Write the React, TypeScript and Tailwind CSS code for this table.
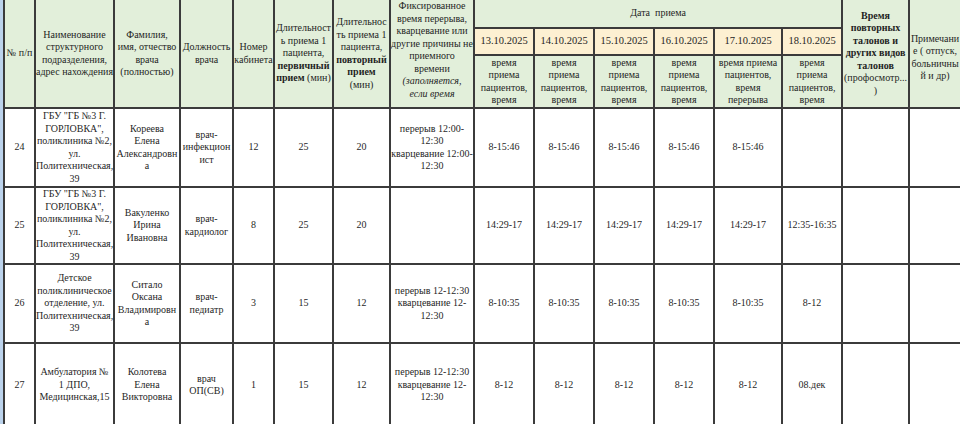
import React from 'react';

const B = 'border-2 border-[#3b3b3b]';
const head = `bg-[#e2efda] ${B} p-0 text-center align-middle`;
const cell = `bg-white ${B} p-0 text-center align-middle`;

const Lines = ({ lines }: { lines: React.ReactNode[] }) => (
  <>
    {lines.map((l, i) => (
      <div key={i} className="whitespace-nowrap">
        {l}
      </div>
    ))}
  </>
);

const addr1 = ['ГБУ "ГБ №3 Г.', 'ГОРЛОВКА",', 'поликлиника №2,', 'ул.', 'Политехническая,', '39'];

const rows = [
  {
    n: '24',
    h: 'h-[79px]',
    addr: addr1,
    fio: ['Кореева', 'Елена', 'Александровн', 'а'],
    pos: ['врач-', 'инфекцион', 'ист'],
    cab: '12',
    first: '25',
    rep: '20',
    brk: ['перерыв 12:00-', '12:30', 'кварцевание 12:00-', '12:30'],
    days: ['8-15:46', '8-15:46', '8-15:46', '8-15:46', '8-15:46', ''],
  },
  {
    n: '25',
    h: 'h-[76px]',
    addr: addr1,
    fio: ['Вакуленко', 'Ирина', 'Ивановна'],
    pos: ['врач-', 'кардиолог'],
    cab: '8',
    first: '25',
    rep: '20',
    brk: [],
    days: ['14:29-17', '14:29-17', '14:29-17', '14:29-17', '14:29-17', '12:35-16:35'],
  },
  {
    n: '26',
    h: 'h-[79px]',
    addr: ['Детское', 'поликлиническое', 'отделение, ул.', 'Политехническая,', '39'],
    fio: ['Ситало', 'Оксана', 'Владимировн', 'а'],
    pos: ['врач-', 'педиатр'],
    cab: '3',
    first: '15',
    rep: '12',
    brk: ['перерыв 12-12:30', 'кварцевание 12-', '12:30'],
    days: ['8-10:35', '8-10:35', '8-10:35', '8-10:35', '8-10:35', '8-12'],
  },
  {
    n: '27',
    h: 'h-[84px]',
    addr: ['Амбулатория №', '1 ДПО,', 'Медицинская,15'],
    fio: ['Колотева', 'Елена', 'Викторовна'],
    pos: ['врач', 'ОП(СВ)'],
    cab: '1',
    first: '15',
    rep: '12',
    brk: ['перерыв 12-12:30', 'кварцевание 12-', '12:30'],
    days: ['8-12', '8-12', '8-12', '8-12', '8-12', '08.дек'],
  },
];

const dates = ['13.10.2025', '14.10.2025', '15.10.2025', '16.10.2025', '17.10.2025', '18.10.2025'];
const sub = ['время', 'приема', 'пациентов,', 'время'];
const sub17 = ['время приема', 'пациентов,', 'время', 'перерыва'];

export default function App() {
  return (
    <div className="w-[960px] h-[424px] overflow-hidden bg-white font-['Liberation_Serif',serif] text-[#1f1f1f]">
      <div className="border-l-[3px] border-[#bcd3ec] w-[960px]">
        <table className="table-fixed border-collapse w-[957px] text-[10px]">
          <colgroup>
            <col className="w-[31px]" />
            <col className="w-[79px]" />
            <col className="w-[66px]" />
            <col className="w-[53px]" />
            <col className="w-[41px]" />
            <col className="w-[59px]" />
            <col className="w-[57px]" />
            <col className="w-[84px]" />
            <col className="w-[60px]" />
            <col className="w-[60px]" />
            <col className="w-[60px]" />
            <col className="w-[60px]" />
            <col className="w-[68px]" />
            <col className="w-[60px]" />
            <col className="w-[67px]" />
            <col className="w-[52px]" />
          </colgroup>
          <thead className="leading-[12.5px]">
            <tr className="h-[28px]">
              <th rowSpan={3} className={`${head} border-t-0 font-normal`}>
                № п/п
              </th>
              <th rowSpan={3} className={`${head} border-t-0 font-normal`}>
                <Lines lines={['Наименование', 'структурного', 'подразделения,', 'адрес нахождения']} />
              </th>
              <th rowSpan={3} className={`${head} border-t-0 font-normal`}>
                <Lines lines={['Фамилия,', 'имя, отчество', 'врача', '(полностью)']} />
              </th>
              <th rowSpan={3} className={`${head} border-t-0 font-normal`}>
                <Lines lines={['Должность', 'врача']} />
              </th>
              <th rowSpan={3} className={`${head} border-t-0 font-normal`}>
                <Lines lines={['Номер', 'кабинета']} />
              </th>
              <th rowSpan={3} className={`${head} border-t-0 font-normal`}>
                <Lines
                  lines={[
                    'Длительност',
                    'ь приема 1',
                    'пациента,',
                    <b>первичный</b>,
                    <>
                      <b>прием</b> (мин)
                    </>,
                  ]}
                />
              </th>
              <th rowSpan={3} className={`${head} border-t-0 font-normal`}>
                <Lines
                  lines={['Длительнос', 'ть приема 1', 'пациента,', <b>повторный</b>, <b>прием</b>, '(мин)']}
                />
              </th>
              <th rowSpan={3} className={`${head} border-t-0 font-normal align-top`}>
                <div className="h-[106px] overflow-hidden">
                  <Lines
                    lines={[
                      'Фиксированное',
                      'время перерыва,',
                      'кварцевание или',
                      'другие причины не',
                      'приемного',
                      'времени',
                      <i>(заполняется,</i>,
                      <i>если время</i>,
                    ]}
                  />
                </div>
              </th>
              <th colSpan={6} className={`${head} border-t-0 font-normal whitespace-pre`}>
                Дата  приема
              </th>
              <th rowSpan={3} className={`${head} border-t-0 font-bold`}>
                <Lines
                  lines={[
                    'Время',
                    'повторных',
                    'талонов и',
                    'других видов',
                    'талонов',
                    <span className="font-normal">(профосмотр...</span>,
                    <span className="font-normal">)</span>,
                  ]}
                />
              </th>
              <th rowSpan={3} className={`${head} border-t-0 font-normal`}>
                <div className="pt-[8px]">
                  <Lines lines={['Примечани', 'е ( отпуск,', 'больничны', 'й и др)']} />
                </div>
              </th>
            </tr>
            <tr className="h-[27px]">
              {dates.map((d) => (
                <th key={d} className={`bg-[#fdf0d2] ${B} p-0 text-center align-middle font-normal text-[10.5px]`}>
                  {d}
                </th>
              ))}
            </tr>
            <tr className="h-[53px]">
              {dates.map((d, i) => (
                <th key={d} className={`${head} font-normal`}>
                  <Lines lines={i === 4 ? sub17 : sub} />
                </th>
              ))}
            </tr>
          </thead>
          <tbody className="leading-[12.5px]">
            {rows.map((r) => (
              <tr key={r.n} className={r.h}>
                <td className={cell}>{r.n}</td>
                <td className={cell}>
                  <Lines lines={r.addr} />
                </td>
                <td className={cell}>
                  <Lines lines={r.fio} />
                </td>
                <td className={cell}>
                  <Lines lines={r.pos} />
                </td>
                <td className={cell}>{r.cab}</td>
                <td className={cell}>{r.first}</td>
                <td className={cell}>{r.rep}</td>
                <td className={cell}>
                  <Lines lines={r.brk} />
                </td>
                {r.days.map((d, i) => (
                  <td key={i} className={cell}>
                    {d}
                  </td>
                ))}
                <td className={cell}></td>
                <td className={cell}></td>
              </tr>
            ))}
          </tbody>
        </table>
      </div>
    </div>
  );
}
